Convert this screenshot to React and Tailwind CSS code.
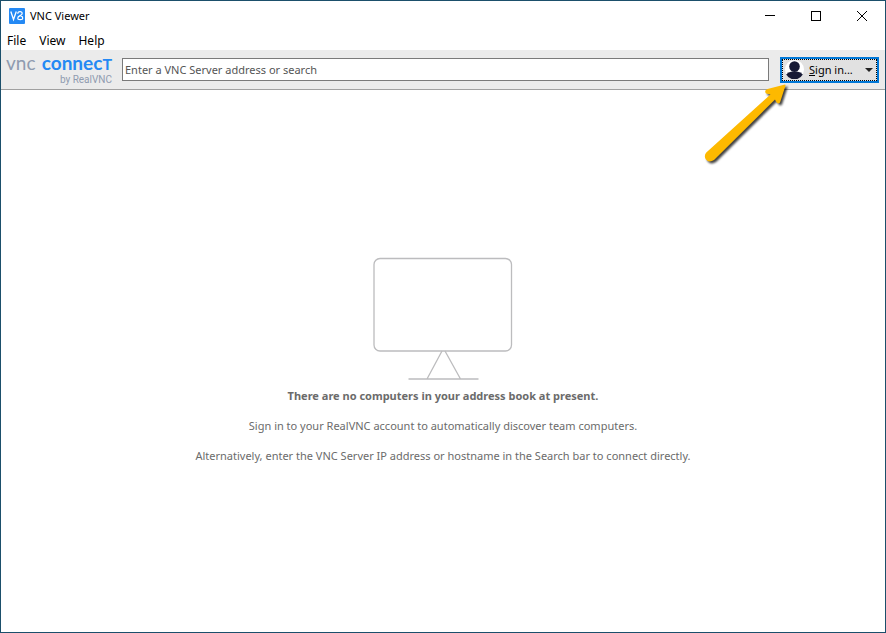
import React from "react";

const menuItems = ["File", "View", "Help"];

const AppIcon = () => (
  <svg width="16" height="16" viewBox="0 0 16 16" fill="none" aria-hidden="true">
    <rect width="16" height="16" rx="1" fill="#2489f4" />
    <path d="M1.800 3.500l2.700 8L7.300 3.500" stroke="#fff" strokeWidth="1.300" />
    <path
      d="M8.800 5.800V5.500C8.800 2.900 13.200 2.900 13.200 5.500 13.200 7.800 8.800 7.400 8.800 10v.5c0 1.500 4.800 1.500 4.800 0V9.500c0-1-1-1.500-2-1.700"
      stroke="#fff"
      strokeWidth="1.200"
    />
  </svg>
);

const TitleBar = () => (
  <header className="flex h-[30px] items-center bg-white pl-2">
    <AppIcon />
    <h1 className="ml-[5px] flex-1 text-[11px] text-black">VNC Viewer</h1>
    <button aria-label="Minimize" className="flex h-full w-[46px] items-center justify-center">
      <svg width="10" height="10" viewBox="0 0 10 10" stroke="#000" shapeRendering="crispEdges">
        <path d="M0 4.500h10" />
      </svg>
    </button>
    <button aria-label="Maximize" className="flex h-full w-[46px] items-center justify-center">
      <svg width="10" height="10" viewBox="0 0 10 10" fill="none" stroke="#000" shapeRendering="crispEdges">
        <rect x="0.5" y="0.5" width="9" height="9" />
      </svg>
    </button>
    <button aria-label="Close" className="flex h-full w-[46px] items-center justify-center">
      <svg width="10" height="10" viewBox="0 0 10 10" fill="none" stroke="#000">
        <path d="M0 0l10 10M10 0L0 10" />
      </svg>
    </button>
  </header>
);

const MenuBar = () => (
  <nav className="flex h-[19px] items-center gap-[13px] bg-white pl-[6px]">
    {menuItems.map((item) => (
      <button key={item} className="text-[12px] leading-4 text-black">
        {item}
      </button>
    ))}
  </nav>
);

const Logo = () => (
  <div className="flex w-[106px] flex-col">
    <div className="flex items-baseline justify-between font-[Lato,sans-serif] text-[19px] leading-5">
      <span className="text-[#8f9bb0]">vnc</span>
      <span className="font-bold text-[#2489f4]">
        connec<span className="text-[16px]">T</span>
      </span>
    </div>
    <span className="text-right font-[Roboto,sans-serif] text-[10px] leading-3 text-[#8f9bb0]">by RealVNC</span>
  </div>
);

const Arrow = () => (
  <svg
    className="pointer-events-none absolute top-[30px] right-[91px] z-10"
    width="95"
    height="90"
    viewBox="0 0 95 90"
    aria-hidden="true"
  >
    <path
      d="M7.300 72.600L71.500 14.500 67 13.500Q64.800 10.300 68.500 9L86 4.500Q87 4.500 86.500 5.500L81 22.500Q79 25 77 21.500L76 19.500 15 80Q10 83 7 79.500 4.500 76 7.300 72.600Z"
      fill="#fdb900"
      className="drop-shadow-[2px_2px_1px_rgba(0,0,0,0.75)]"
    />
  </svg>
);

const SignInButton = () => (
  <button className="flex h-[26px] w-[99px] items-center border-2 border-[#0078d7] bg-[#e1e1e1] text-[11px] text-black">
    <span className="flex h-full w-full items-center border border-dotted border-black pl-[2px]">
      <svg width="19" height="19" viewBox="0 0 19 19" aria-hidden="true">
        <circle cx="9.500" cy="9.500" r="9.500" fill="#fff" />
        <circle cx="9.500" cy="6.600" r="5.300" fill="#171a35" />
        <path d="M1.200 14.500Q3 12.200 7 11.500h5q4 .7 5.800 3A9.500 9.500 0 0 1 1.200 14.500z" fill="#171a35" />
      </svg>
      <span className="ml-[5px] flex-1 text-left leading-4">
        <u>S</u>ign in...
      </span>
      <svg width="8" height="4" viewBox="0 0 8 4" className="mr-[3px]" aria-hidden="true">
        <path d="M0 0h8L4 4z" fill="#222" />
      </svg>
    </span>
  </button>
);

const Toolbar = () => (
  <div className="relative flex h-10 items-center border-b border-[#a0a0a0] bg-[#ebebeb] pr-[6px] pl-[5px]">
    <Logo />
    <input
      type="text"
      aria-label="VNC Server address or search"
      placeholder="Enter a VNC Server address or search"
      className="mr-[11px] ml-[10px] h-[23px] min-w-0 flex-1 border border-[#7a7a7a] bg-white px-[2px] text-[11px] text-[#555] outline-none placeholder:text-[#555]"
    />
    <SignInButton />
    <Arrow />
  </div>
);

const Monitor = () => (
  <svg width="140" height="124" viewBox="0 0 140 124" fill="none" stroke="#bcbcbe" aria-hidden="true">
    <rect x="1" y="1.500" width="137.500" height="92.500" rx="6" strokeWidth="1.300" />
    <path d="M69 94L54 122M72 94L87.500 122M35.500 122h70" strokeWidth="1.300" />
  </svg>
);

const EmptyState = () => (
  <main className="flex flex-1 flex-col items-center bg-white pt-[167px] text-center text-[11px] leading-[18px] text-[#6b6b6b]">
    <Monitor />
    <div className="mt-[6px] flex flex-col gap-3">
      <p className="font-bold">There are no computers in your address book at present.</p>
      <p>Sign in to your RealVNC account to automatically discover team computers.</p>
      <p>Alternatively, enter the VNC Server IP address or hostname in the Search bar to connect directly.</p>
    </div>
  </main>
);

const App = () => {
  return (
    <div className="flex min-h-screen flex-col border border-[#1b4f6b] bg-white font-['Noto_Sans',sans-serif]">
      <TitleBar />
      <MenuBar />
      <Toolbar />
      <EmptyState />
    </div>
  );
};

export default App;
